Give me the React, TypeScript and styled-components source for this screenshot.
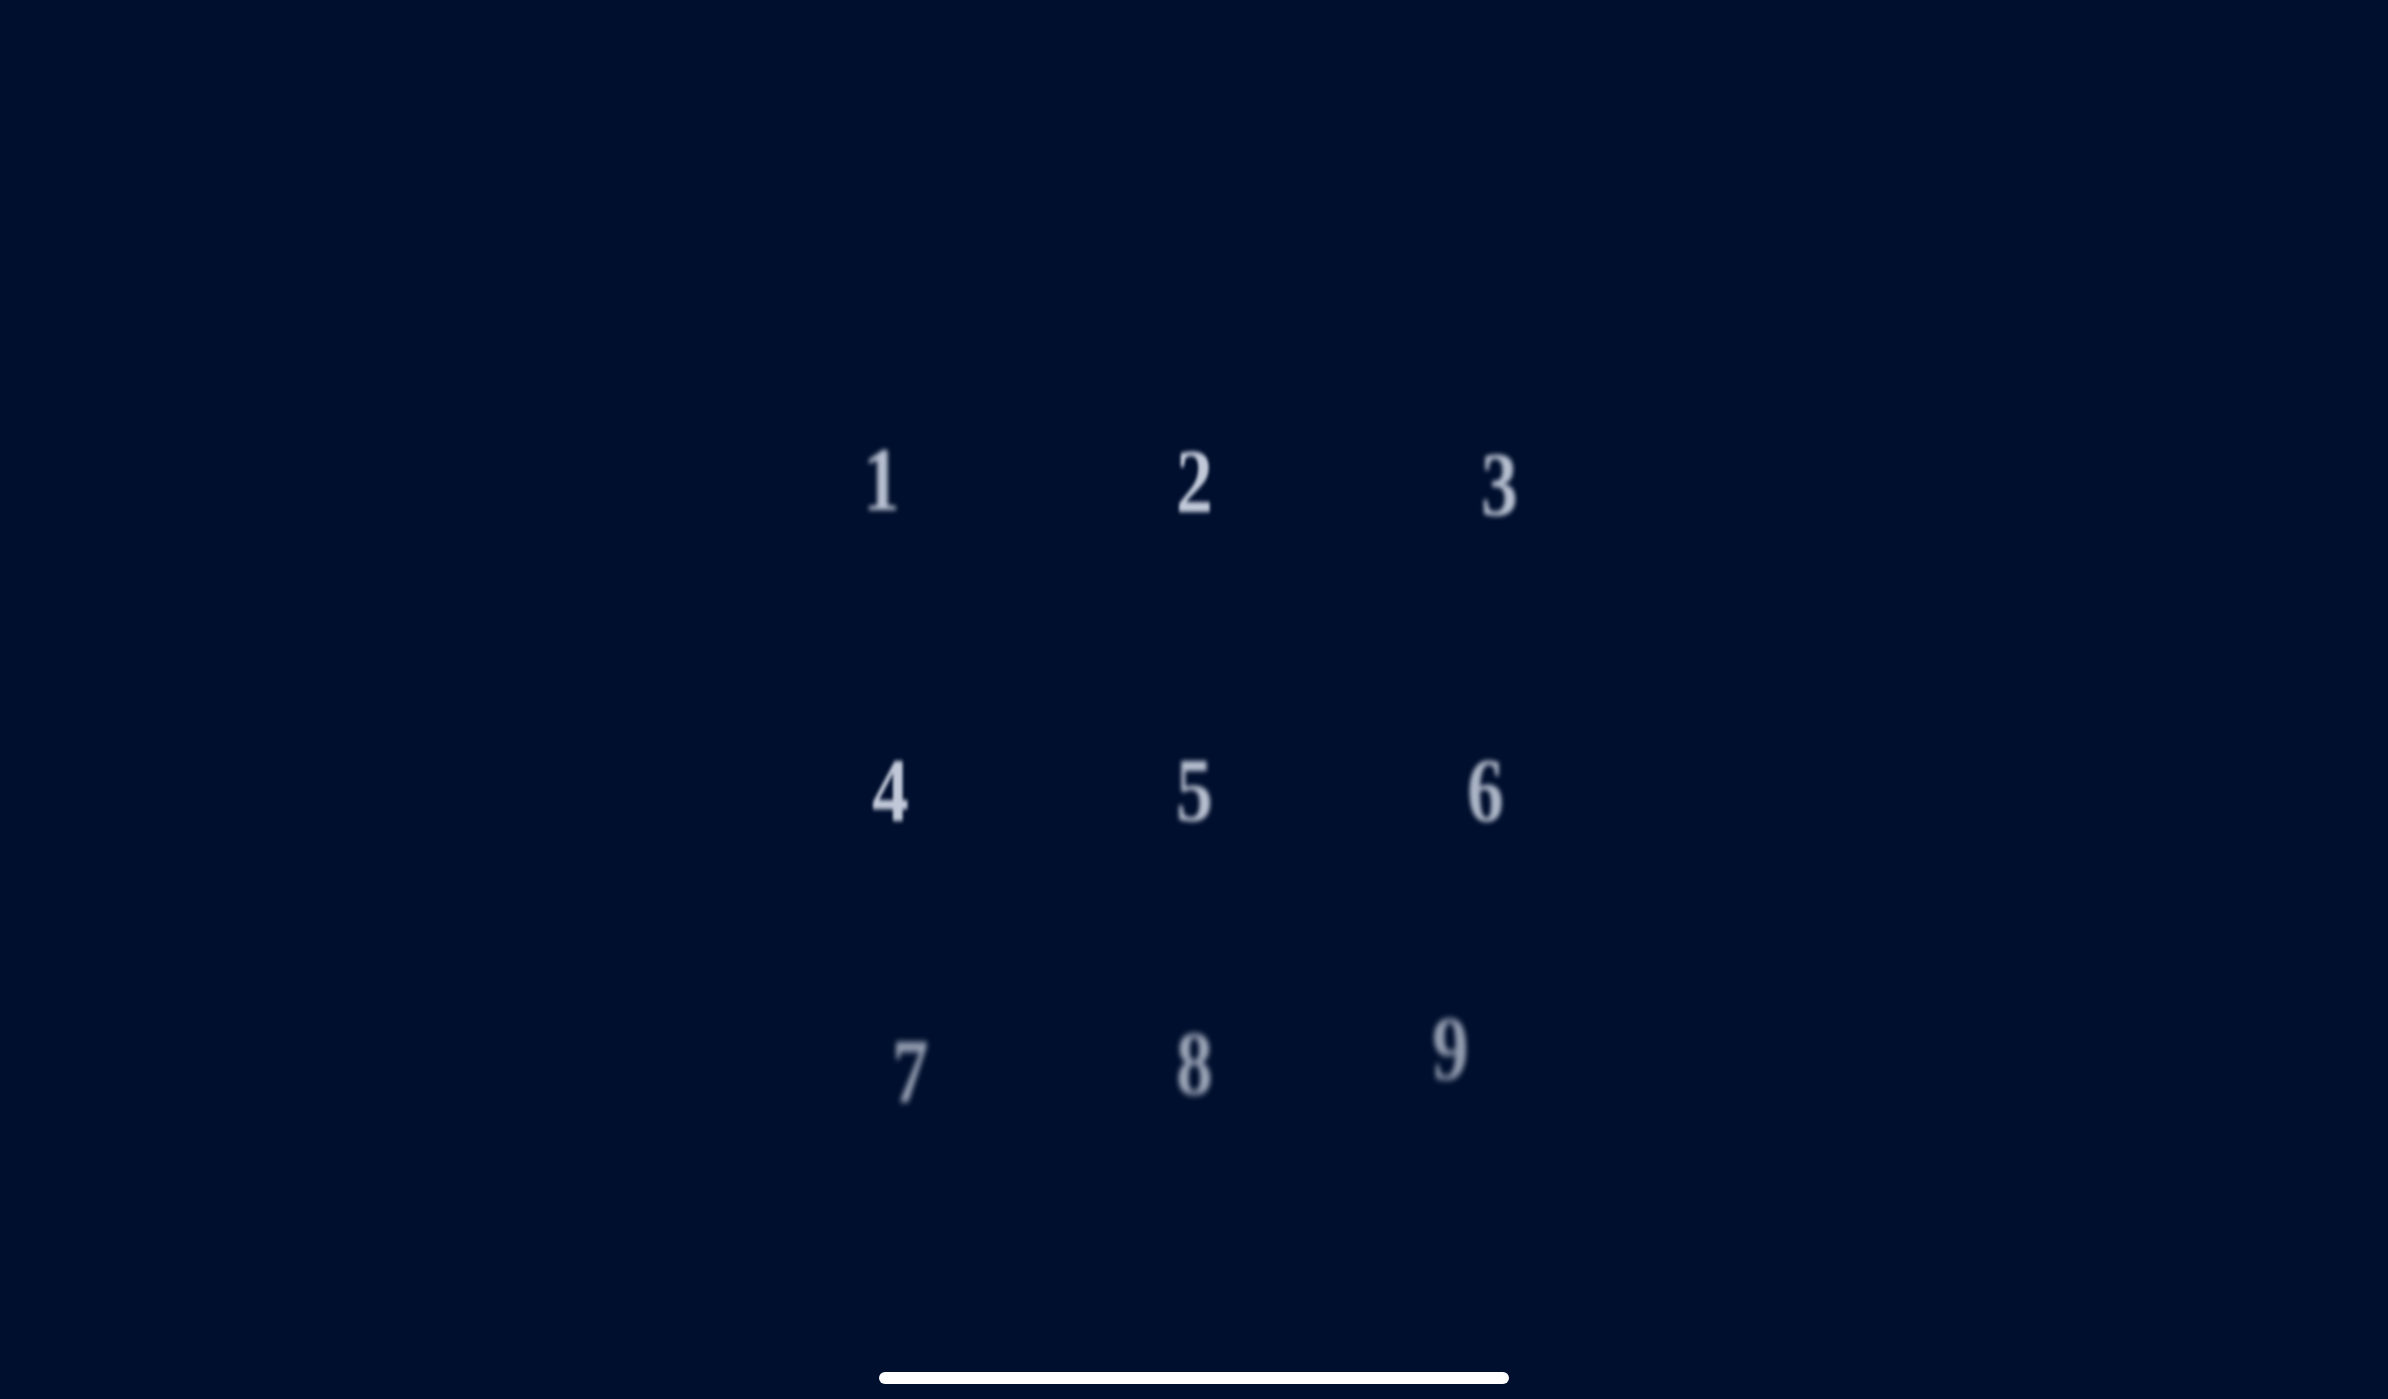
import React from "react";
import styled, { createGlobalStyle } from "styled-components";

const Global = createGlobalStyle`
  html, body { margin: 0; padding: 0; background: #010f2e; }
  #root { min-height: 100vh; }
`;

const Screen = styled.div`
  width: 100%;
  height: 100vh;
  background: #010f2e;
  display: flex;
  flex-direction: column;
  align-items: center;
  padding-top: 335px;
  box-sizing: border-box;
  overflow: hidden;
`;

const Pad = styled.div`
  display: grid;
  grid-template-columns: repeat(3, 305px);
  grid-auto-rows: 295px;
`;

const Cell = styled.div<{ $dx: number; $dy: number; $blur: number; $alpha: number }>`
  display: flex;
  align-items: center;
  justify-content: center;
  font-family: "Liberation Serif", "DejaVu Serif", serif;
  font-size: 92px;
  font-weight: 700;
  line-height: 1;
  color: rgba(214, 222, 236, ${(p) => p.$alpha});
  filter: blur(${(p) => p.$blur}px);
  transform: translate(${(p) => p.$dx}px, ${(p) => p.$dy}px) scaleX(0.8);
`;

const HomeIndicator = styled.div`
  margin-top: auto;
  margin-bottom: 15px;
  width: 630px;
  height: 12px;
  border-radius: 6px;
  background: #ffffff;
`;

const keys = [
  { n: "1", dx: -8, dy: -4, blur: 2.4, a: 0.85 },
  { n: "2", dx: 0, dy: -2, blur: 2.2, a: 0.9 },
  { n: "3", dx: 0, dy: 1, blur: 2.4, a: 0.85 },
  { n: "4", dx: 1, dy: 12, blur: 2.2, a: 0.9 },
  { n: "5", dx: 0, dy: 12, blur: 2.4, a: 0.85 },
  { n: "6", dx: -14, dy: 12, blur: 2.6, a: 0.8 },
  { n: "7", dx: 21, dy: -2, blur: 3, a: 0.7 },
  { n: "8", dx: 0, dy: -10, blur: 3, a: 0.72 },
  { n: "9", dx: -49, dy: -25, blur: 3, a: 0.68 },
];

export default function App() {
  return (
    <>
      <Global />
      <Screen>
        <Pad>
          {keys.map((k) => (
            <Cell key={k.n} $dx={k.dx} $dy={k.dy} $blur={k.blur} $alpha={k.a}>
              {k.n}
            </Cell>
          ))}
        </Pad>
        <HomeIndicator />
      </Screen>
    </>
  );
}
